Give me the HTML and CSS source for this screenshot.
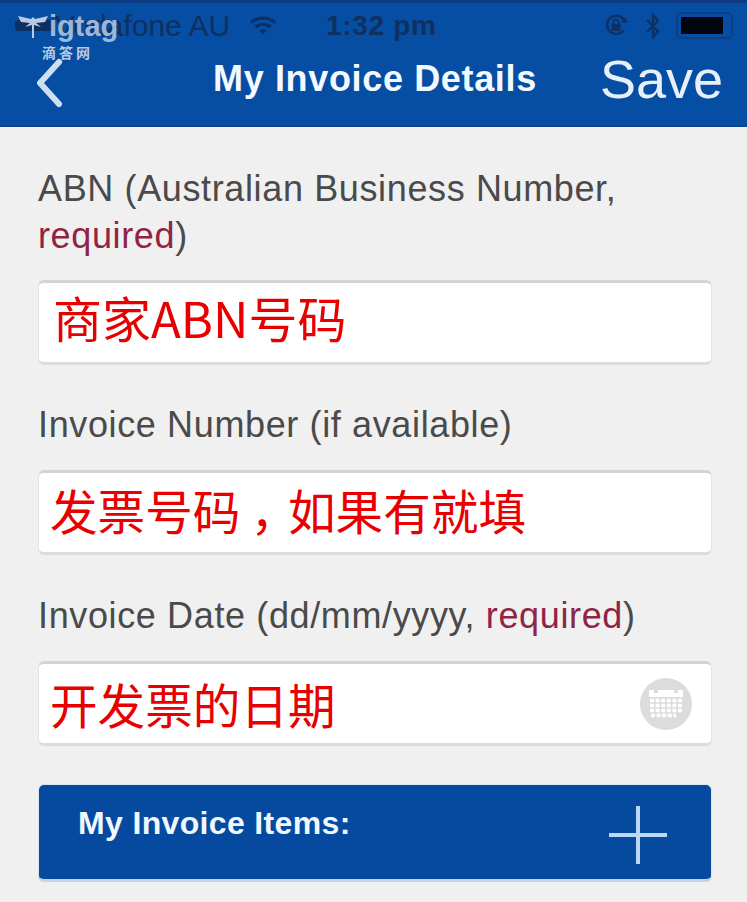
FILE: index.html
```html
<!DOCTYPE html>
<html lang="zh">
<head>
<meta charset="utf-8">
<title>My Invoice Details</title>
<link rel="stylesheet" href="styles.css">
</head>
<body>
<header class="header">
  <div class="status">
    <div class="status-left">
      <span class="signal"></span>
      <span class="carrier">Vodafone AU</span>
      <svg class="wifi" width="26" height="20" viewBox="0 0 26 20"><path d="M1 6.5C8 0.5 18 0.5 25 6.5M5.5 11C10 7.5 16 7.5 20.5 11" fill="none" stroke="#0e2f63" stroke-width="3.2"/><path d="M9.5 14.2C11.5 12.6 14.5 12.6 16.5 14.2L13 18.5Z" fill="#0e2f63"/></svg>
    </div>
    <span class="time">1:32 pm</span>
    <div class="status-right">
      <svg class="lock" width="27" height="27" viewBox="0 0 27 27"><path d="M20.5 18.5A9.2 9.2 0 1 1 20.8 7.5" fill="none" stroke="#0e2f63" stroke-width="2.2"/><path d="M18 10.5L25 10.5L22 5Z" fill="#0e2f63"/><rect x="8.5" y="12" width="9" height="7" fill="#0e2f63"/><path d="M10.5 12V10A2.5 2.5 0 0 1 15.5 10V12" fill="none" stroke="#0e2f63" stroke-width="1.6"/></svg>
      <svg class="bt" width="16" height="26" viewBox="0 0 16 26"><path d="M2 7L13 18L8 24V2L13 8L2 19" fill="none" stroke="#0e2f63" stroke-width="2.4"/></svg>
      <div class="battery"><span class="battery-fill"></span></div>
    </div>
  </div>
  <nav class="nav">
    <svg class="back" width="32" height="50" viewBox="0 0 32 50"><path d="M25 4L6 25L25 46" fill="none" stroke="#cfdff2" stroke-width="6" stroke-linecap="round" stroke-linejoin="round"/></svg>
    <h1 class="title">My Invoice Details</h1>
    <span class="save">Save</span>
  </nav>
  <div class="watermark">
    <div class="wm-logo">
      <svg width="30" height="24" viewBox="0 0 30 24"><path d="M0 2L13 5L15 3L17 5L30 2L27 8L18 9L23 13L16 11V24H14V11L7 13L12 9L3 8Z" fill="#b9cbe3"/></svg>
      <span class="wm-text">igtag</span>
    </div>
    <div class="wm-sub">滴答网</div>
  </div>
</header>
<main class="form">
  <label class="label label-abn">ABN (Australian Business Number, <span class="req">required</span>)</label>
  <div class="field"><span class="note note-abn">商家ABN号码</span></div>
  <label class="label">Invoice Number (if available)</label>
  <div class="field"><span class="note note-raised note-tight">发票号码<span class="comma">，</span>如果有就填</span></div>
  <label class="label label-date">Invoice Date (dd/mm/yyyy, <span class="req">required</span>)</label>
  <div class="field">
    <span class="note note-tight">开发票的日期</span>
    <svg class="cal" width="52" height="52" viewBox="0 0 52 52">
      <circle cx="26" cy="26" r="26" fill="#dcdcdc"/>
      <path d="M9 12H43V19H9Z" fill="#fff"/>
      <rect x="14" y="9" width="4" height="6" fill="#dcdcdc"/>
      <rect x="34" y="9" width="4" height="6" fill="#dcdcdc"/>
      <path d="M10 22.5H42M10 27.5H42M10 32.5H42M11 37.5H36" stroke="#fff" stroke-width="3.4" stroke-dasharray="4 1.6" fill="none"/>
    </svg>
  </div>
  <section class="items">
    <h2 class="items-title">My Invoice Items:</h2>
    <svg class="plus" width="58" height="58" viewBox="0 0 58 58"><path d="M29 0V58M0 29H58" stroke="#bcd6f5" stroke-width="4"/></svg>
  </section>
</main>
</body>
</html>
```
FILE: styles.css
```css
* { box-sizing: border-box; }
html, body { margin: 0; padding: 0; }
body {
  width: 747px;
  height: 902px;
  overflow: hidden;
  background: #f0f0f0;
  font-family: "Liberation Sans", Arial, sans-serif;
}
.header {
  position: relative;
  height: 127px;
  background: #064ea3;
  border-top: 3px solid #0d3a80;
  border-bottom: 2px solid #0b4289;
}
.status {
  height: 42px;
  display: flex;
  align-items: center;
  padding: 3px 14px 0 15px;
  color: #10305f;
  font-size: 30px;
}
.status-left { display: flex; align-items: center; }
.signal { width: 40px; height: 11px; border-radius: 4px; background: #0e2f63; }
.carrier { width: 195px; white-space: nowrap; }
.time { margin-left: 50px; font-size: 28px; font-weight: 700; letter-spacing: 0.7px; }
.status-right { margin-left: auto; display: flex; align-items: center; gap: 15px; }
.battery { width: 57px; height: 27px; border: 2px solid #0d3f86; border-radius: 5px; padding: 3px; }
.battery-fill { display: block; width: 42px; height: 17px; background: #02060f; }
.nav {
  height: 78px;
  display: flex;
  align-items: center;
  padding: 0 24px 0 34px;
}
.back { flex: none; margin-bottom: 2px; }
.title {
  margin: 0 0 10px 147px;
  font-size: 36px;
  font-weight: 700;
  letter-spacing: 0.65px;
  color: #f4f9ff;
  white-space: nowrap;
}
.save { margin: 0 0 10px auto; font-size: 54px; color: #e6effa; }
.watermark { position: absolute; left: 18px; top: 9px; color: #b9cbe3; }
.wm-logo { display: flex; align-items: center; height: 28px; }
.wm-text { font-size: 29px; font-weight: 700; line-height: 28px; opacity: 0.85; margin-left: 1px; }
.wm-sub {
  margin: 4px 0 0 24px;
  font-size: 14px;
  font-weight: 700;
  letter-spacing: 3px;
  font-family: "Noto Sans CJK SC", sans-serif;
  line-height: 16px;
}
.form { padding: 38px 35px 0 38px; }
.label {
  display: block;
  font-size: 36px;
  letter-spacing: 0.63px;
  line-height: 47px;
  color: #4a4a4a;
  margin-bottom: 22px;
}
.label-abn { margin-bottom: 21px; }
.label-date { margin-top: 37px; }
.req { color: #8f2444; }
.field {
  height: 85px;
  background: #fff;
  border: 1px solid #e3e3e3;
  border-top: 3px solid #d4d4d4;
  border-bottom: 3px solid #dcdcdc;
  border-radius: 6px;
  display: flex;
  align-items: center;
  justify-content: space-between;
  padding: 0 19px 0 14px;
  margin-bottom: 36px;
}
.note {
  font-family: "Noto Sans CJK SC", sans-serif;
  font-size: 47.6px;
  line-height: 60px;
  color: #e80000;
  white-space: nowrap;
}
.note-abn { font-size: 49px; margin-bottom: 11px; }
.note-raised { margin-bottom: 6px; }
.note-tight { margin-left: -3px; }
.comma { padding-left: 10px; letter-spacing: -10px; }
.cal { flex: none; }
.items {
  height: 98px;
  margin-top: 38px;
  background: #054a9e;
  border-radius: 6px;
  border: 1px solid #dbe6f3;
  border-bottom: 3px solid #c6d3e3;
  display: flex;
  justify-content: space-between;
  padding: 20px 44px 0 39px;
}
.items-title {
  margin: 0;
  font-size: 32px;
  letter-spacing: 0.35px;
  line-height: 36px;
  font-weight: 700;
  color: #f0f7ff;
}
.plus { flex: none; margin-top: 1px; }
```
